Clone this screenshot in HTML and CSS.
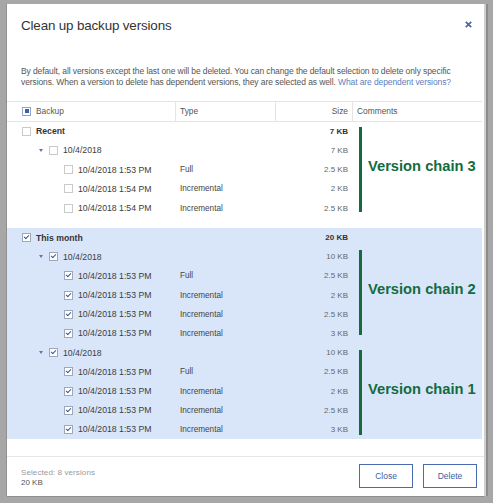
FILE: index.html
```html
<!DOCTYPE html>
<html lang="en">
<head>
	<meta charset="utf-8">
	<title>Clean up backup versions</title>
	<link rel="stylesheet" href="styles.css">
</head>
<body>
<div class="dialog">
	<div class="dlg-head">
		<span class="title">Clean up backup versions</span>
		<svg class="close-x" width="7" height="7" viewBox="0 0 7 7"><path d="M0.8 0.8L6.2 6.2M6.2 0.8L0.8 6.2" stroke="#4a68a0" stroke-width="1.7"/></svg>
	</div>
	<p class="desc">By default, all versions except the last one will be deleted. You can change the default selection to delete only specific<br>versions. When a version to delete has dependent versions, they are selected as well. <a class="link">What are dependent versions?</a></p>

	<div class="table">
		<div class="thead">
			<div class="c-name"><span class="cb part"></span>Backup</div>
			<div class="c-type">Type</div>
			<div class="c-size">Size</div>
			<div class="c-com">Comments</div>
		</div>
		<div class="rows">
			<div class="group">
				<div class="row lvl0"><div class="c-name"><span class="cb"></span>Recent</div><div class="c-type"></div><div class="c-size">7 KB</div><div></div></div>
				<div class="row lvl1"><div class="c-name"><span class="caret"></span><span class="cb"></span>10/4/2018</div><div class="c-type"></div><div class="c-size">7 KB</div><div></div></div>
				<div class="row lvl2"><div class="c-name"><span class="cb"></span>10/4/2018 1:53 PM</div><div class="c-type">Full</div><div class="c-size">2.5 KB</div><div></div></div>
				<div class="row lvl2"><div class="c-name"><span class="cb"></span>10/4/2018 1:54 PM</div><div class="c-type">Incremental</div><div class="c-size">2 KB</div><div></div></div>
				<div class="row lvl2"><div class="c-name"><span class="cb"></span>10/4/2018 1:54 PM</div><div class="c-type">Incremental</div><div class="c-size">2.5 KB</div><div></div></div>
			</div>
			<div class="group selected">
				<div class="row lvl0"><div class="c-name"><span class="cb on"></span>This month</div><div class="c-type"></div><div class="c-size">20 KB</div><div></div></div>
				<div class="row lvl1"><div class="c-name"><span class="caret"></span><span class="cb on"></span>10/4/2018</div><div class="c-type"></div><div class="c-size">10 KB</div><div></div></div>
				<div class="row lvl2"><div class="c-name"><span class="cb on"></span>10/4/2018 1:53 PM</div><div class="c-type">Full</div><div class="c-size">2.5 KB</div><div></div></div>
				<div class="row lvl2"><div class="c-name"><span class="cb on"></span>10/4/2018 1:53 PM</div><div class="c-type">Incremental</div><div class="c-size">2 KB</div><div></div></div>
				<div class="row lvl2"><div class="c-name"><span class="cb on"></span>10/4/2018 1:53 PM</div><div class="c-type">Incremental</div><div class="c-size">2.5 KB</div><div></div></div>
				<div class="row lvl2"><div class="c-name"><span class="cb on"></span>10/4/2018 1:53 PM</div><div class="c-type">Incremental</div><div class="c-size">3 KB</div><div></div></div>
				<div class="row lvl1"><div class="c-name"><span class="caret"></span><span class="cb on"></span>10/4/2018</div><div class="c-type"></div><div class="c-size">10 KB</div><div></div></div>
				<div class="row lvl2"><div class="c-name"><span class="cb on"></span>10/4/2018 1:53 PM</div><div class="c-type">Full</div><div class="c-size">2.5 KB</div><div></div></div>
				<div class="row lvl2"><div class="c-name"><span class="cb on"></span>10/4/2018 1:53 PM</div><div class="c-type">Incremental</div><div class="c-size">2 KB</div><div></div></div>
				<div class="row lvl2"><div class="c-name"><span class="cb on"></span>10/4/2018 1:53 PM</div><div class="c-type">Incremental</div><div class="c-size">2.5 KB</div><div></div></div>
				<div class="row lvl2"><div class="c-name"><span class="cb on"></span>10/4/2018 1:53 PM</div><div class="c-type">Incremental</div><div class="c-size">3 KB</div><div></div></div>
			</div>

			<!-- hand drawn notes over the comments column -->
			<div class="chain chain3"><span class="bar"></span><span class="label">Version chain 3</span></div>
			<div class="chain chain2"><span class="bar"></span><span class="label">Version chain 2</span></div>
			<div class="chain chain1"><span class="bar"></span><span class="label">Version chain 1</span></div>
		</div>
	</div>

	<div class="spacer"></div>

	<div class="footer">
		<div class="sel">
			<div class="sel-count">Selected: 8 versions</div>
			<div class="sel-size">20 KB</div>
		</div>
		<div class="buttons">
			<button class="btn">Close</button>
			<button class="btn">Delete</button>
		</div>
	</div>
</div>
</body>
</html>
```

FILE: styles.css
```css
html, body{
	margin: 0;
	height: 100%;
}
body{
	background: #a7a7a7;
	font-family: "Liberation Sans", Arial, sans-serif;
	color: #3c3c3c;
	overflow: hidden;
}
.dialog{
	margin: 4px 0 0 7px;
	width: 477px;
	height: 492px;
	background: #fff;
	display: flex;
	flex-direction: column;
	box-shadow: -1px 0 0 #909090, 0 1px 0 #8e8e8e, 2px 0 0 #d0d0d0, 4px 0 0 #8c8c8c;
}
.dlg-head{
	display: flex;
	justify-content: space-between;
	align-items: center;
	height: 18px;
	padding: 12px 12px 0 14px;
}
.title{
	font-size: 13.4px;
	letter-spacing: -0.15px;
	color: #333;
}
.close-x{
	margin-top: -2px;
}
.desc{
	margin: 32px 14px 0;
	font-size: 8.5px;
	line-height: 11px;
	letter-spacing: -0.1px;
	color: #555;
}
.link{
	color: #5b7fbf;
}
.table{
	margin: 12.7px 2px 0 0;
}
.thead, .row{
	display: grid;
	grid-template-columns: 168px 100px 77px 1fr;
	align-items: center;
}
.thead{
	height: 21px;
	box-sizing: border-box;
	border-top: 1px solid #e4e4e4;
	border-bottom: 1px solid #e4e4e4;
	font-size: 8.4px;
	color: #555;
}
.thead > div{
	height: 100%;
	display: flex;
	align-items: center;
}
.thead .c-type, .thead .c-size, .thead .c-com{
	border-left: 1px solid #e4e4e4;
}
.thead .c-size{
	justify-content: flex-end;
}
.c-name{
	display: flex;
	align-items: center;
	padding-left: 15px;
	white-space: nowrap;
}
.c-type{
	padding-left: 5px;
}
.thead .c-type{
	padding-left: 4px;
}
.c-size{
	text-align: right;
	padding-right: 4px;
}
.c-com{
	padding-left: 4px;
}
.rows{
	position: relative;
}
.group{
	margin-bottom: 10.3px;
}
.group.selected{
	background: #d9e6fa;
	margin-bottom: 0;
}
.row{
	height: 19.2px;
}
.row .c-name{
	font-size: 8.7px;
}
.row .c-type{
	font-size: 8.2px;
	color: #444;
}
.row .c-size{
	font-size: 8px;
	color: #666;
}
.lvl0 .c-name{
	font-weight: bold;
	color: #333;
}
.lvl0 .c-size{
	font-weight: bold;
	color: #333;
}
.lvl1 .c-name{
	padding-left: 32px;
}
.lvl2 .c-name{
	padding-left: 57px;
}
.cb{
	display: inline-block;
	position: relative;
	width: 9px;
	height: 9px;
	box-sizing: border-box;
	border: 1px solid #cacaca;
	background: #fff;
	margin-right: 5px;
	flex-shrink: 0;
}
.cb.on{
	border-color: #9ea8ba;
}
.cb.on::after{
	content: '';
	position: absolute;
	left: 2px;
	top: 0px;
	width: 2px;
	height: 4px;
	border: solid #3f5b8c;
	border-width: 0 1.2px 1.2px 0;
	transform: rotate(45deg);
}
.cb.part{
	border-color: #8ea4cc;
}
.cb.part::after{
	content: '';
	position: absolute;
	left: 1.5px;
	top: 1.5px;
	width: 4px;
	height: 4px;
	background: #3f60a0;
}
.caret{
	width: 0;
	height: 0;
	border-left: 2.5px solid transparent;
	border-right: 2.5px solid transparent;
	border-top: 3px solid #5b79b0;
	margin-right: 6px;
}
.chain{
	position: absolute;
	left: 352px;
	height: 85px;
	display: flex;
	align-items: center;
}
.chain3{
	top: 5px;
}
.chain2{
	top: 128.3px;
}
.chain1{
	top: 228.3px;
}
.bar{
	width: 3px;
	align-self: stretch;
	background: #136b3e;
	margin-right: 6px;
}
.label{
	font-size: 14.7px;
	font-weight: bold;
	color: #136b3e;
	margin-bottom: 7px;
	white-space: nowrap;
}
.spacer{
	flex: 1;
}
.footer{
	height: 40px;
	box-sizing: border-box;
	border-top: 1px solid #e6e6e6;
	display: flex;
	justify-content: space-between;
	align-items: center;
	padding: 0 7px 0 14px;
}
.sel{
	font-size: 8px;
	line-height: 10.3px;
	margin-top: 3px;
}
.sel-count{
	color: #9a9a9a;
	letter-spacing: 0.1px;
}
.sel-size{
	color: #555;
}
.buttons{
	display: flex;
	margin-bottom: 1px;
}
.btn{
	width: 54px;
	height: 24px;
	margin-left: 10px;
	border: 1px solid #4a6bb0;
	background: #fff;
	color: #3c5ea2;
	font-family: "Liberation Sans", Arial, sans-serif;
	font-size: 8.5px;
	padding: 0;
}
```
